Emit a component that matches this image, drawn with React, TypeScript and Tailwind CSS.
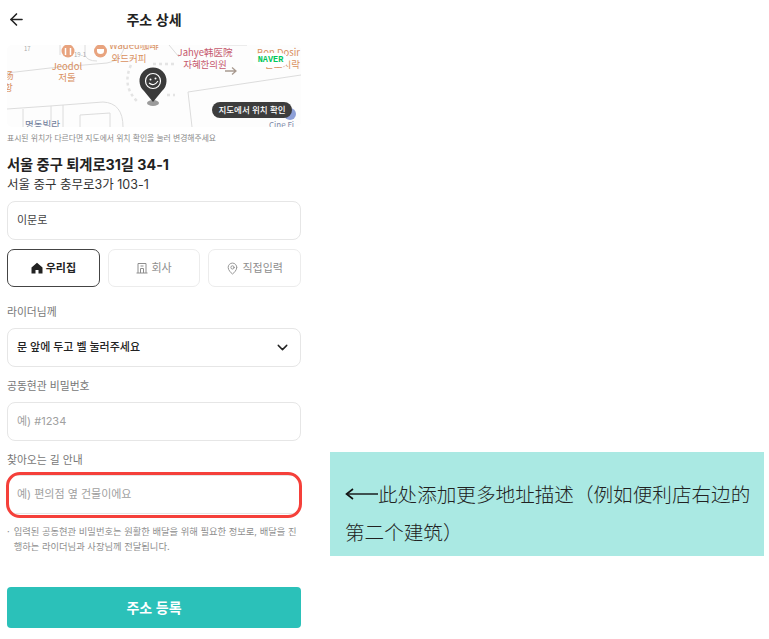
import { ArrowLeft, ChevronDown, MapPin } from 'lucide-react'

const KR = "font-['Inter','Noto_Sans_CJK_KR',sans-serif]"

const MapPreview = () => (
  <div className="relative h-[82px] w-full overflow-hidden rounded-[5px] bg-[#fdfdfd]">
    <svg viewBox="0 0 294 82" className="block h-full w-full" aria-hidden="true">
      <g fill="none" stroke="#dcdcdc" strokeWidth="1">
        <path d="M0 28 L43 23 L100 18 Q112 16 116 6 L118 0" />
        <path d="M0 64 L43 61 L96 57 Q116 58 116 82" />
        <path d="M16 64 V82 M44 61 V82 M56 60 V82" />
        <path d="M73 70 L103 68 V82 M73 70 V82" />
        <path d="M181 47 L294 30 M181 47 L185 82" />
        <path d="M162 0 L172 12 M214 0 L240 0" />
        <path d="M53 0 V10 M78 0 V10 Q80 16 90 16" />
      </g>
      <g stroke="#e4e4e4" strokeWidth="2.5" fill="none" strokeDasharray="3 3">
        <path d="M124 20 Q114 42 132 58" />
        <path d="M146 19 H168" />
        <path d="M160 50 H168" />
      </g>
      <circle cx="61" cy="6" r="6.5" fill="#e8a37e" />
      <path d="M58.5 3 V10 M63.5 3 V10" stroke="#fff" strokeWidth="1.5" />
      <circle cx="93.5" cy="6" r="6.5" fill="#e8a37e" />
      <path d="M90 4 H97 V6 Q97 9 93.5 9 Q90 9 90 6 Z" fill="#fff" />
      <g fontFamily="'Noto Sans CJK SC','Noto Sans CJK KR',sans-serif" fontSize="9.5">
        <text x="60" y="25" textAnchor="middle" fill="#d9905f">Jeodol</text>
        <text x="60" y="36" textAnchor="middle" fill="#d9905f">저돌</text>
        <text x="-3" y="34" fill="#d9905f">杨</text>
        <text x="-3" y="46" fill="#d9905f">항</text>
        <text x="127" y="4" textAnchor="middle" fill="#d9905f">Wadeu咖啡</text>
        <text x="122" y="17" textAnchor="middle" fill="#d9905f">와드커피</text>
        <text x="198" y="11" textAnchor="middle" fill="#c65a6e">Jahye韩医院</text>
        <text x="198" y="23" textAnchor="middle" fill="#c65a6e">자혜한의원</text>
        <text x="250" y="11" fill="#d9905f">Bon Dosir</text>
        <text x="258" y="23" fill="#d9905f">본도시락</text>
        <text x="18" y="83" fill="#6d7b9a">명동빌라</text>
        <text x="262" y="83" fontSize="8" fill="#7d8aa8">Cine Fi</text>
        <text x="17" y="6" fontSize="6" fill="#aaa">17</text>
        <text x="67" y="12" fontSize="6" fill="#aaa">19-1</text>
      </g>
      <path d="M218 26 H229 M225 22.5 L229 26 L225 29.5" stroke="#a89a90" strokeWidth="1.3" fill="none" />
      <circle cx="283" cy="69" r="6" fill="#8ea0d8" />
      <ellipse cx="146" cy="58" rx="6" ry="3" fill="#9b9b9b" />
      <path d="M146 57 L137 46 A13.5 13.5 0 1 1 155 46 Z" fill="#3b3b3b" />
      <circle cx="146" cy="36" r="7.5" fill="none" stroke="#fff" strokeWidth="1.2" />
      <circle cx="143.5" cy="34.5" r="1" fill="#fff" />
      <circle cx="148.5" cy="33.5" r="1" fill="#fff" />
      <path d="M142 38 Q147 42 151 36" stroke="#fff" strokeWidth="1.1" fill="none" />
    </svg>
    <span className="absolute left-[246px] top-[8px] flex h-[14px] w-[35px] items-center justify-center rounded-full bg-white font-['Liberation_Mono',monospace] text-[8.5px] font-bold text-[#03c75a]">
      NAVER
    </span>
    <span className="absolute left-[205px] top-[57px] flex h-[16px] w-[80px] items-center justify-center rounded-full bg-[#3d3d3d] text-[8.5px] font-medium text-white">
      지도에서 위치 확인
    </span>
  </div>
)

const HomeIcon = () => (
  <svg viewBox="0 0 12 12" className="h-[12px] w-[12px]" aria-hidden="true">
    <path d="M6 .8 L11.5 5.6 V11.5 H7.5 V8 H4.5 V11.5 H.5 V5.6 Z" fill="#222" />
  </svg>
)

const OfficeIcon = () => (
  <svg viewBox="0 0 12 12" className="h-[12px] w-[12px]" fill="none" stroke="#8e8e8e" strokeWidth="1" aria-hidden="true">
    <path d="M2 11 V1.5 H10 V11 M.5 11 H11.5 M4.5 4 H7.5 M4.5 6.5 H7.5 V11 M4.5 6.5 V11" />
  </svg>
)

const TypeButton = ({ icon, label, active }: { icon: React.ReactNode; label: string; active?: boolean }) => (
  <div
    className={`flex h-[38px] flex-1 items-center justify-center gap-[3px] rounded-[7px] border text-[11px] ${
      active ? 'border-[#444] font-semibold text-[#222]' : 'border-[#ececec] text-[#8e8e8e]'
    }`}
  >
    {icon}
    {label}
  </div>
)

const Field = ({ children, className = '' }: { children: React.ReactNode; className?: string }) => (
  <div className={`flex h-[39px] items-center justify-between rounded-[8px] border border-[#e6e6e6] px-[9px] text-[11px] ${className}`}>
    {children}
  </div>
)

const App = () => {
  return (
    <div className={`flex h-[639px] w-[769px] overflow-hidden bg-white ${KR}`}>
      <div className="flex w-[308px] shrink-0 flex-col px-[7px]">
        <header className="relative flex h-[45px] shrink-0 items-start justify-center pt-[11px]">
          <ArrowLeft className="absolute left-[0px] top-[10px] h-[19px] w-[19px] text-[#222]" strokeWidth={2} />
          <h1 className="text-[14px] font-semibold leading-[18px] text-[#222]">주소 상세</h1>
        </header>

        <MapPreview />
        <p className="mt-[5px] text-[7.8px] leading-[12px] text-[#8a8a8a]">
          표시된 위치가 다르다면 지도에서 위치 확인을 눌러 변경해주세요
        </p>

        <h2 className="mt-[11px] text-[14.25px] font-bold leading-[20px] text-[#222]">서울 중구 퇴계로31길 34-1</h2>
        <p className="mt-[1px] text-[12.5px] leading-[18px] text-[#333]">서울 중구 충무로3가 103-1</p>

        <Field className="mt-[7px] text-[#444]">이문로</Field>

        <div className="mt-[9px] flex gap-[8px]">
          <TypeButton active label="우리집" icon={<HomeIcon />} />
          <TypeButton label="회사" icon={<OfficeIcon />} />
          <TypeButton label="직접입력" icon={<MapPin className="h-[13px] w-[13px]" strokeWidth={1.7} />} />
        </div>

        <label className="mt-[18px] text-[10.8px] leading-[15px] text-[#777]">라이더님께</label>
        <Field className="mt-[8px] font-medium text-[#222]">
          문 앞에 두고 벨 눌러주세요
          <ChevronDown className="h-[17px] w-[17px] text-[#222]" strokeWidth={2} />
        </Field>

        <label className="mt-[12px] text-[10.8px] leading-[15px] text-[#777]">공동현관 비밀번호</label>
        <Field className="mt-[8px] text-[#a0a0a0]">예) #1234</Field>

        <label className="mt-[12px] text-[10.8px] leading-[15px] text-[#777]">찾아오는 길 안내</label>
        <div className="relative mt-[4px]">
          <Field className="mt-[3px] text-[#a0a0a0]">예) 편의점 옆 건물이에요</Field>
          <div className="absolute -inset-x-[1px] top-0 h-[46px] rounded-[14px] border-[3px] border-[#f5403a]" />
        </div>

        <ul className="mt-[10px] text-[9.3px] leading-[15px] text-[#8e8e8e]">
          <li className="flex gap-[4px]">
            <span>·</span>
            <span className="break-all">입력된 공동현관 비밀번호는 원활한 배달을 위해 필요한 정보로, 배달을 진행하는 라이더님과 사장님께 전달됩니다.</span>
          </li>
        </ul>

        <button className="mt-[33px] h-[41px] shrink-0 rounded-[4px] bg-[#2bc1b9] text-[14px] font-semibold text-white">
          주소 등록
        </button>
      </div>

      <div className="ml-[22px] mt-[452px] h-[104px] w-[434px] shrink-0 bg-[#aae9e3] py-[23px] pl-[15px] pr-[10px] font-['Noto_Sans_CJK_SC',serif] text-[19.6px] font-light leading-[38px] text-[#222]">
        <svg viewBox="0 0 33 12" className="inline-block h-[12px] w-[33px] align-[2px]" fill="none" stroke="#111" aria-hidden="true">
          <path d="M2 6 H33" strokeWidth="1.4" />
          <path d="M8 1 L1.5 6 L8 11" strokeWidth="1.6" />
        </svg>
        此处添加更多地址描述（例如便利店右边的第二个建筑）
      </div>
    </div>
  )
}

export default App
